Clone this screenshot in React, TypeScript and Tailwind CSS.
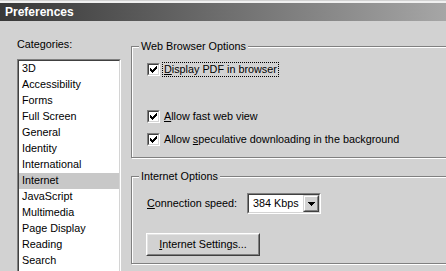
import React from 'react';

const categories = [
    '3D', 'Accessibility', 'Forms', 'Full Screen', 'General', 'Identity', 'International',
    'Internet', 'JavaScript', 'Multimedia', 'Page Display', 'Reading', 'Search',
];

// classic 7x7 pixel check mark, one 3px column per x
const CheckMark = () => (
    <svg width="7" height="7" viewBox="0 0 7 7" shapeRendering="crispEdges">
        {[2, 3, 4, 3, 2, 1, 0].map((y, x) => (
            <rect key={x} x={x} y={y} width="1" height="3" fill="#000" />
        ))}
    </svg>
);

const Checkbox: React.FC<{ children: React.ReactNode; focused?: boolean }> = ({ children, focused }) => (
    <div className="flex items-center h-[17px]">
        <span className="flex w-[13px] h-[13px] border border-t-[#808080] border-l-[#808080] border-r-white border-b-white">
            <span className="flex flex-1 items-center justify-center bg-white border border-t-[#404040] border-l-[#404040] border-r-[#d4d4d4] border-b-[#d4d4d4]">
                <CheckMark />
            </span>
        </span>
        <span
            className={
                'ml-[2px] px-[1px] leading-[13px] border border-dotted ' +
                (focused ? 'border-black' : 'border-transparent')
            }
        >
            {children}
        </span>
    </div>
);

const GroupBox: React.FC<{ title: string; className: string; children: React.ReactNode }> = ({ title, className, children }) => (
    <fieldset className={'w-[330px] border border-[#808080] shadow-[1px_1px_0_#fff,inset_1px_1px_0_#fff] ' + className}>
        <legend className="ml-[7px] px-[2px] leading-[14px] bg-[#d2d2d2]">{title}</legend>
        {children}
    </fieldset>
);

export default function App() {
    return (
        <div
            className="w-[446px] h-[271px] overflow-hidden bg-[#d2d2d2] text-black text-[10.8px]"
            style={{ fontFamily: '"Liberation Sans", Arial, sans-serif' }}
        >
            {/* title bar */}
            <div className="h-px bg-[#d2d2d2]" />
            <div className="h-[2px] bg-[#f0f0f0]" />
            <div className="h-[18px] flex items-center pl-[5px] bg-gradient-to-r from-[#383838] via-[#6e6e6e] to-[#a6a6a6]">
                <span className="text-white font-bold text-[12px] leading-[14px]">Preferences</span>
            </div>

            <div className="flex">
                {/* categories */}
                <div className="pl-[17px] w-[131px] shrink-0">
                    <div className="mt-[16px] leading-[14px]">Categories:</div>
                    <div className="mt-[8px] w-[104px] h-[230px] border border-t-[#808080] border-l-[#808080] border-r-white border-b-white">
                        <div className="h-full bg-white border border-t-[#404040] border-l-[#404040] border-r-[#d4d4d4] border-b-[#d4d4d4] overflow-hidden">
                            {categories.map(c => (
                                <div
                                    key={c}
                                    className={'h-[16px] leading-[15px] pl-[3px] ' + (c === 'Internet' ? 'bg-[#c8c8c8]' : '')}
                                >
                                    {c}
                                </div>
                            ))}
                        </div>
                    </div>
                </div>

                {/* options */}
                <div className="flex flex-col">
                    <GroupBox title="Web Browser Options" className="mt-[18px] h-[119px]">
                        <div className="pl-[15px] flex flex-col">
                            <div className="mt-[8px]">
                                <Checkbox focused>
                                    <u>D</u>isplay PDF in browser
                                </Checkbox>
                            </div>
                            <div className="mt-[30px]">
                                <Checkbox>
                                    <u>A</u>llow fast web view
                                </Checkbox>
                            </div>
                            <div className="mt-[6px]">
                                <Checkbox>
                                    Allow <u>s</u>peculative downloading in the background
                                </Checkbox>
                            </div>
                        </div>
                    </GroupBox>

                    <GroupBox title="Internet Options" className="mt-[11px] h-[95px]">
                        <div className="pl-[15px] flex flex-col">
                            <div className="mt-[10px] flex items-center">
                                <span className="w-[100px]">
                                    <u>C</u>onnection speed:
                                </span>
                                <div className="flex w-[74px] h-[21px] border border-t-[#808080] border-l-[#808080] border-r-white border-b-white">
                                    <div className="flex flex-1 items-center bg-white border border-t-[#404040] border-l-[#404040] border-r-[#d4d4d4] border-b-[#d4d4d4]">
                                        <span className="flex-1 pl-[4px] leading-[13px]">384 Kbps</span>
                                        <div className="flex w-[16px] h-full border border-t-[#d4d4d4] border-l-[#d4d4d4] border-r-[#404040] border-b-[#404040]">
                                            <div className="flex flex-1 items-center justify-center bg-[#d2d2d2] border border-t-white border-l-white border-r-[#808080] border-b-[#808080]">
                                                <svg width="7" height="4" viewBox="0 0 7 4" shapeRendering="crispEdges">
                                                    <path d="M0 0H7V1H6V2H5V3H4V4H3V3H2V2H1V1H0Z" fill="#000" />
                                                </svg>
                                            </div>
                                        </div>
                                    </div>
                                </div>
                            </div>
                            <button className="mt-[19px] -ml-[1px] w-[114px] h-[23px] flex border border-t-white border-l-white border-r-[#404040] border-b-[#404040] bg-[#d2d2d2]">
                                <span className="flex flex-1 items-center justify-center border border-t-[#e4e4e4] border-l-[#e4e4e4] border-r-[#808080] border-b-[#808080] leading-[13px]">
                                    <span>
                                        <u>I</u>nternet Settings...
                                    </span>
                                </span>
                            </button>
                        </div>
                    </GroupBox>
                </div>
            </div>
        </div>
    );
}
